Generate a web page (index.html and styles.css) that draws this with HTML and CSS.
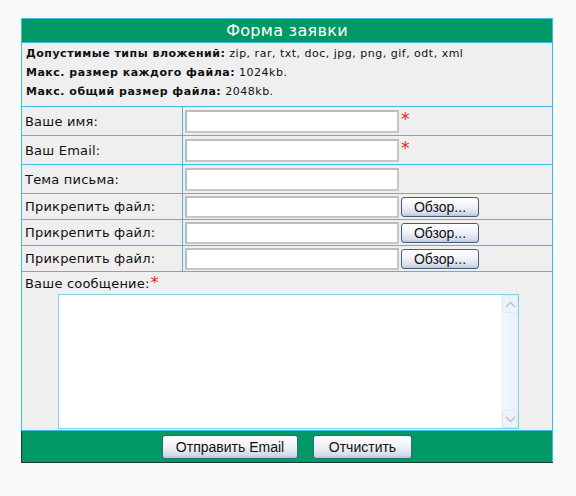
FILE: index.html
```html
<!DOCTYPE html>
<html lang="ru">
<head>
<meta charset="utf-8">
<title>Форма заявки</title>
<link rel="stylesheet" href="styles.css">
</head>
<body>
<form class="order-form">
  <table class="form-table">
    <tr>
      <th class="form-title" colspan="2">Форма заявки</th>
    </tr>
    <tr>
      <td class="form-info" colspan="2">
        <div class="info-line"><b>Допустимые типы вложений:</b> zip, rar, txt, doc, jpg, png, gif, odt, xml</div>
        <div class="info-line"><b>Макс. размер каждого файла:</b> 1024kb.</div>
        <div class="info-line"><b>Макс. общий размер файла:</b> 2048kb.</div>
      </td>
    </tr>
    <tr class="field-row">
      <td class="field-label">Ваше имя:</td>
      <td class="field-cell"><input class="text-input" type="text"><span class="req">*</span></td>
    </tr>
    <tr class="field-row">
      <td class="field-label">Ваш Email:</td>
      <td class="field-cell"><input class="text-input" type="text"><span class="req">*</span></td>
    </tr>
    <tr class="field-row">
      <td class="field-label">Тема письма:</td>
      <td class="field-cell"><input class="text-input" type="text"></td>
    </tr>
    <tr class="file-row">
      <td class="field-label">Прикрепить файл:</td>
      <td class="field-cell"><input class="text-input file-input" type="text"><button class="browse-btn" type="button">Обзор...</button></td>
    </tr>
    <tr class="file-row">
      <td class="field-label">Прикрепить файл:</td>
      <td class="field-cell"><input class="text-input file-input" type="text"><button class="browse-btn" type="button">Обзор...</button></td>
    </tr>
    <tr class="file-row">
      <td class="field-label">Прикрепить файл:</td>
      <td class="field-cell"><input class="text-input file-input" type="text"><button class="browse-btn" type="button">Обзор...</button></td>
    </tr>
    <tr>
      <td class="message-cell" colspan="2">
        <div class="message-label">Ваше сообщение:<span class="req req-inline">*</span></div>
        <div class="message-box">
          <textarea class="message-area"></textarea>
          <div class="fake-scroll">
            <span class="scroll-btn"><svg width="11" height="7" viewBox="0 0 11 7"><path d="M1 6 L5.5 1.5 L10 6" fill="none" stroke="#b9c6dc" stroke-width="1.6"/></svg></span>
            <span class="scroll-track"></span>
            <span class="scroll-btn"><svg width="11" height="7" viewBox="0 0 11 7"><path d="M1 1 L5.5 5.5 L10 1" fill="none" stroke="#b9c6dc" stroke-width="1.6"/></svg></span>
          </div>
        </div>
      </td>
    </tr>
    <tr>
      <td class="form-footer" colspan="2">
        <button class="action-btn send-btn" type="button">Отправить Email</button><button class="action-btn clear-btn" type="button">Отчистить</button>
      </td>
    </tr>
  </table>
</form>
</body>
</html>
```

FILE: styles.css
```css
html, body {
  margin: 0;
  padding: 0;
  background: #fafafa;
}

body {
  font-family: "DejaVu Sans", Verdana, sans-serif;
  color: #111;
}

.order-form {
  padding: 18px 0 0 21px;
}

.form-table {
  width: 532px;
  border-collapse: collapse;
  border: 1px solid #3fbedf;
  background: #efefef;
}

.form-table td,
.form-table th {
  border: 1px solid #3fbedf;
  padding: 0;
}

.form-title {
  background: #009966;
  color: #fff;
  font-weight: normal;
  font-size: 16px;
  height: 23px;
  text-align: center;
  letter-spacing: 0.3px;
}

.form-info {
  height: 62px;
  padding: 1px 0 0 4px !important;
  font-size: 11px;
  line-height: 19px;
  letter-spacing: 0.5px;
  vertical-align: top;
}

.info-line b {
  font-weight: bold;
}

.field-label {
  width: 157px;
  padding-left: 3px !important;
  font-size: 13px;
  letter-spacing: 0.2px;
  vertical-align: middle;
}

.field-row td {
  height: 28px;
}

.file-row td {
  height: 25px;
}

.field-cell {
  padding-left: 2px !important;
  white-space: nowrap;
}

.text-input {
  box-sizing: border-box;
  width: 214px;
  height: 23px;
  margin: 0;
  border: 2px solid #c6c6c6;
  border-top-color: #bdbdbd;
  border-left-color: #bdbdbd;
  background: #fff;
  vertical-align: middle;
}

.file-input {
  height: 22px;
}

.req {
  color: #e8262c;
  font-size: 17px;
  line-height: 1;
  vertical-align: top;
  margin-left: 2px;
  position: relative;
  top: 1px;
}

.req-inline {
  font-size: 16px;
  margin-left: 1px;
  top: 0;
}

.browse-btn {
  box-sizing: border-box;
  width: 78px;
  height: 20px;
  margin: 0 0 0 2px;
  padding: 0;
  border: 1px solid #4a5d80;
  border-radius: 3px;
  background: linear-gradient(#ffffff 0%, #f1f3f8 45%, #d6dcea 85%, #b9c3d8 100%);
  font-family: "Liberation Sans", Arial, sans-serif;
  font-size: 14px;
  line-height: 18px;
  color: #111;
  vertical-align: middle;
}

.message-cell {
  padding: 3px 0 1px 3px !important;
  vertical-align: top;
}

.message-label {
  font-size: 13px;
  letter-spacing: 0.2px;
  line-height: 18px;
  height: 19px;
}

.message-box {
  display: flex;
  box-sizing: border-box;
  width: 461px;
  height: 135px;
  margin-left: 33px;
  border: 1px solid #7fd2ea;
  background: #fff;
}

.message-area {
  flex: 1;
  border: none;
  margin: 0;
  padding: 2px;
  resize: none;
  outline: none;
  background: #fff;
}

.fake-scroll {
  display: flex;
  flex-direction: column;
  width: 16px;
  background: linear-gradient(90deg, #f3f6fc, #eaf0fa);
  border-left: 1px solid #f0f3fa;
}

.scroll-btn {
  display: flex;
  align-items: center;
  justify-content: center;
  height: 16px;
  border: 1px solid #e2e8f3;
  border-radius: 2px;
  background: #eef2fa;
}

.scroll-track {
  flex: 1;
}

.form-footer {
  background: #009966;
  height: 31px;
  text-align: center;
  border-left: 1px solid #1f3a30 !important;
  border-bottom: 1px solid #1f3a30 !important;
}

.action-btn {
  box-sizing: border-box;
  height: 24px;
  margin: 0;
  padding: 0;
  border: 1px solid #2b6d79;
  border-radius: 3px;
  background: linear-gradient(#ffffff 0%, #f1f3f8 45%, #d6dcea 85%, #b9c3d8 100%);
  font-family: "Liberation Sans", Arial, sans-serif;
  font-size: 14px;
  color: #111;
  vertical-align: middle;
}

.send-btn {
  width: 136px;
}

.clear-btn {
  width: 99px;
  margin-left: 15px;
}
```
